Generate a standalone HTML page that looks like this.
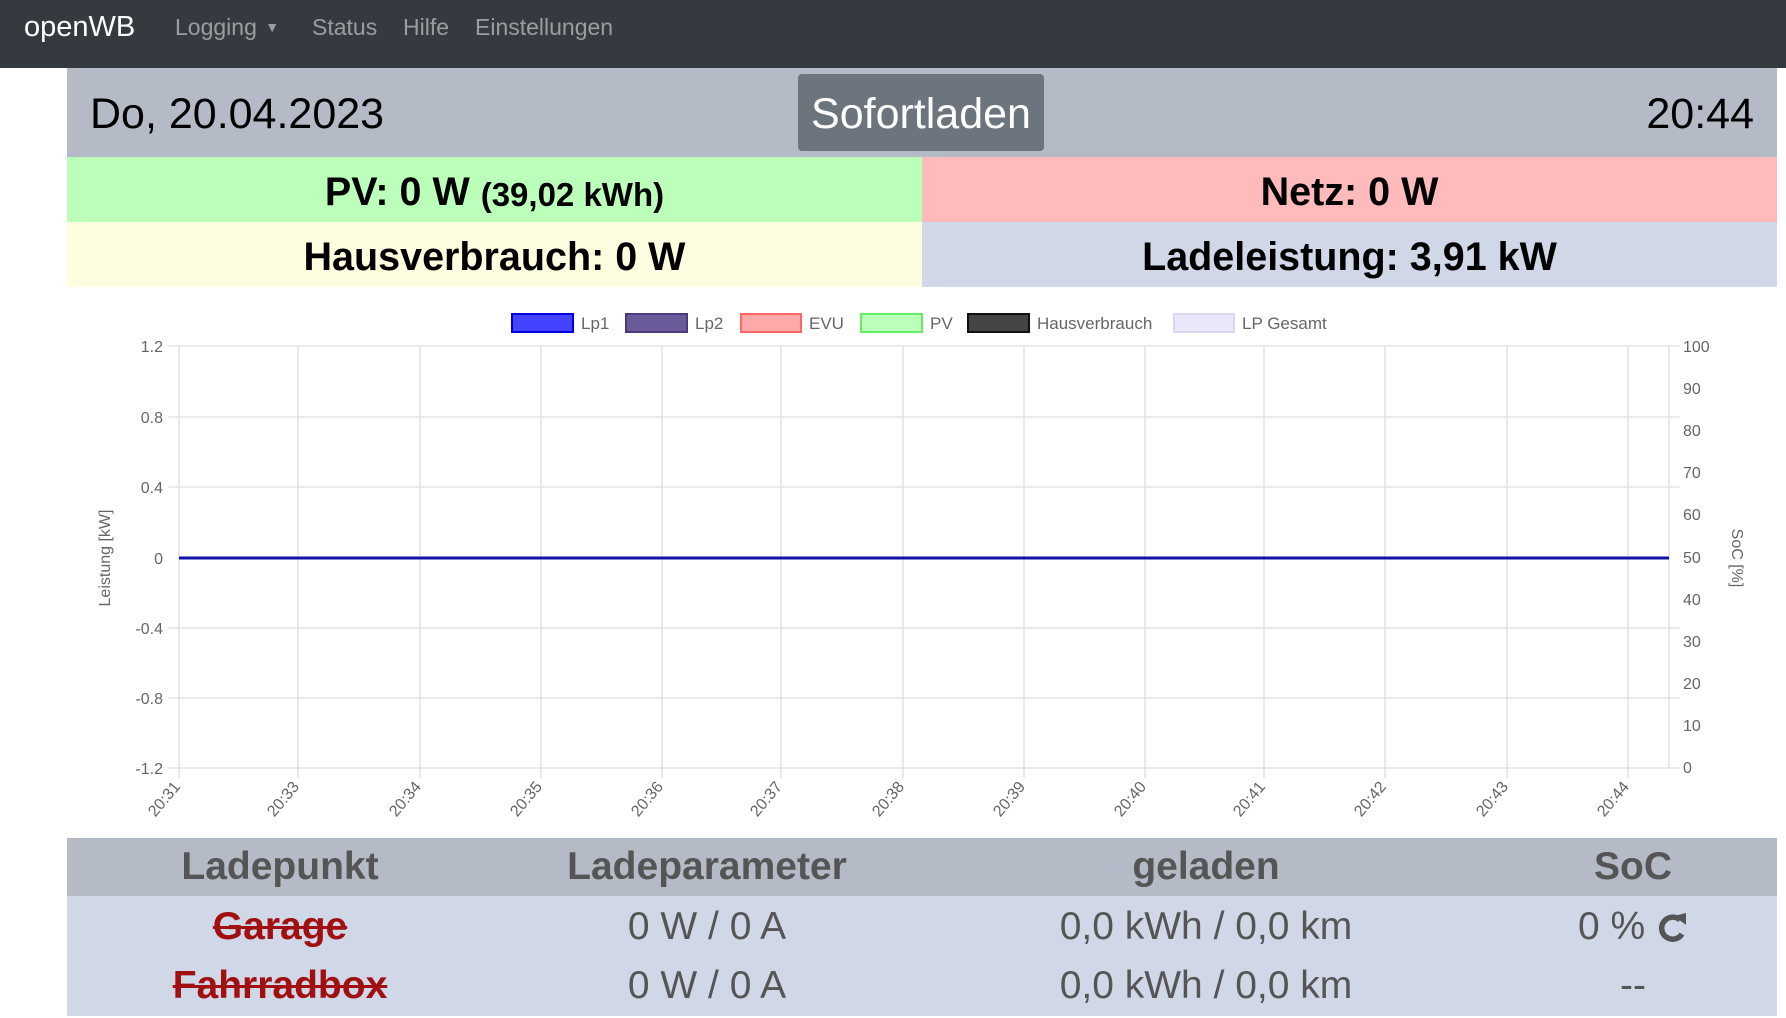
<!DOCTYPE html>
<html><head><meta charset="utf-8"><style>
*{margin:0;padding:0;box-sizing:border-box}
body{width:1786px;height:1018px;background:#fff;font-family:"Liberation Sans",sans-serif;position:relative;overflow:hidden}
.abs{position:absolute}
.nav{left:0;top:0;width:1786px;height:68px;background:#343a40}
.nav span{position:absolute;top:14px;font-size:23px;color:rgba(255,255,255,.5)}
.row{position:absolute;display:flex;align-items:center;justify-content:center;font-weight:bold;font-size:39.5px;color:#000;padding-top:6px}
.th,.td{position:absolute;text-align:center;font-size:39px;color:#555}
.th{font-weight:bold}
</style></head><body>
<div class="abs nav">
<span style="left:24px;top:11px;font-size:29px;color:#fff">openWB</span>
<span style="left:175px">Logging <span style="position:relative;top:-3px;font-size:14px;left:2px">▼</span></span>
<span style="left:312px">Status</span>
<span style="left:403px">Hilfe</span>
<span style="left:475px">Einstellungen</span>
</div>
<div class="abs" style="left:67px;top:68px;width:1710px;height:89px;background:#b4bac6"></div>
<div class="abs" style="left:90px;top:90px;font-size:43px;color:#000">Do, 20.04.2023</div>
<div class="abs" style="right:32px;top:90px;font-size:43px;color:#000">20:44</div>
<div class="abs" style="left:798px;top:74px;width:246px;height:77px;background:#6c757d;border-radius:4px;color:#fff;font-size:43px;display:flex;align-items:center;justify-content:center;padding-top:3px">Sofortladen</div>
<div class="row" style="left:67px;top:157px;width:855px;height:65px;background:#bbffbb">PV: 0 W&nbsp;<span style="font-size:33px;position:relative;top:2px">(39,02 kWh)</span></div>
<div class="row" style="left:922px;top:157px;width:855px;height:65px;background:#ffbbbb">Netz: 0 W</div>
<div class="row" style="left:67px;top:222px;width:855px;height:65px;background:#fffde0">Hausverbrauch: 0 W</div>
<div class="row" style="left:922px;top:222px;width:855px;height:65px;background:#d0d8e8">Ladeleistung: 3,91 kW</div>

<svg class="abs" style="left:0;top:0" width="1786" height="1018" font-family="Liberation Sans, sans-serif">
<g font-size="17" fill="#666">
<rect x="512" y="314" width="61" height="18" fill="#4444ff" stroke="#0000dd" stroke-width="2"/><text x="581" y="329">Lp1</text>
<rect x="626" y="314" width="61" height="18" fill="#6a5a9a" stroke="#4a3a80" stroke-width="2"/><text x="695" y="329">Lp2</text>
<rect x="741" y="314" width="60" height="18" fill="#ffaaaa" stroke="#ff6666" stroke-width="2"/><text x="809" y="329">EVU</text>
<rect x="861" y="314" width="61" height="18" fill="#bbffbb" stroke="#66ee66" stroke-width="2"/><text x="930" y="329">PV</text>
<rect x="968" y="314" width="61" height="18" fill="#444" stroke="#111" stroke-width="2"/><text x="1037" y="329">Hausverbrauch</text>
<rect x="1174" y="314" width="60" height="18" fill="#e8e8fa" stroke="#d8d8f0" stroke-width="2"/><text x="1242" y="329">LP Gesamt</text>
</g>
<g stroke="#ddd" stroke-width="1.3">
<line x1="168" y1="346" x2="1680" y2="346"/><line x1="168" y1="417" x2="1680" y2="417"/><line x1="168" y1="487" x2="1680" y2="487"/><line x1="168" y1="628" x2="1680" y2="628"/><line x1="168" y1="698" x2="1680" y2="698"/><line x1="168" y1="768" x2="1680" y2="768"/>
<line x1="179" y1="346" x2="179" y2="778"/><line x1="298" y1="346" x2="298" y2="778"/><line x1="420" y1="346" x2="420" y2="778"/><line x1="541" y1="346" x2="541" y2="778"/><line x1="662" y1="346" x2="662" y2="778"/><line x1="781" y1="346" x2="781" y2="778"/><line x1="903" y1="346" x2="903" y2="778"/><line x1="1024" y1="346" x2="1024" y2="778"/><line x1="1145" y1="346" x2="1145" y2="778"/><line x1="1264" y1="346" x2="1264" y2="778"/><line x1="1385" y1="346" x2="1385" y2="778"/><line x1="1507" y1="346" x2="1507" y2="778"/><line x1="1628" y1="346" x2="1628" y2="778"/><line x1="1669" y1="346" x2="1669" y2="768"/>
</g>
<line x1="179" y1="558" x2="1669" y2="558" stroke="#1010aa" stroke-width="3"/>
<g font-size="16" fill="#666" text-anchor="end">
<text x="163" y="352">1.2</text><text x="163" y="423">0.8</text><text x="163" y="493">0.4</text><text x="163" y="564">0</text><text x="163" y="634">-0.4</text><text x="163" y="704">-0.8</text><text x="163" y="774">-1.2</text>
</g>
<g font-size="16" fill="#666">
<text x="1683" y="352">100</text><text x="1683" y="394">90</text><text x="1683" y="436">80</text><text x="1683" y="478">70</text><text x="1683" y="520">60</text><text x="1683" y="563">50</text><text x="1683" y="605">40</text><text x="1683" y="647">30</text><text x="1683" y="689">20</text><text x="1683" y="731">10</text><text x="1683" y="773">0</text>
</g>
<text transform="translate(110,558) rotate(-90)" text-anchor="middle" font-size="16" fill="#666">Leistung [kW]</text>
<text transform="translate(1732,558) rotate(90)" text-anchor="middle" font-size="16" fill="#666">SoC [%]</text>
<g font-size="16" fill="#666" text-anchor="end">
<text transform="translate(181,787) rotate(-50)">20:31</text>
<text transform="translate(300,787) rotate(-50)">20:33</text>
<text transform="translate(422,787) rotate(-50)">20:34</text>
<text transform="translate(543,787) rotate(-50)">20:35</text>
<text transform="translate(664,787) rotate(-50)">20:36</text>
<text transform="translate(783,787) rotate(-50)">20:37</text>
<text transform="translate(905,787) rotate(-50)">20:38</text>
<text transform="translate(1026,787) rotate(-50)">20:39</text>
<text transform="translate(1147,787) rotate(-50)">20:40</text>
<text transform="translate(1266,787) rotate(-50)">20:41</text>
<text transform="translate(1387,787) rotate(-50)">20:42</text>
<text transform="translate(1509,787) rotate(-50)">20:43</text>
<text transform="translate(1630,787) rotate(-50)">20:44</text>
</g>
</svg>

<div class="abs" style="left:67px;top:838px;width:1710px;height:58px;background:#b4bac6"></div>
<div class="abs" style="left:67px;top:896px;width:1710px;height:120px;background:#d0d8e8"></div>
<div class="th" style="left:80px;width:400px;top:845px">Ladepunkt</div>
<div class="th" style="left:507px;width:400px;top:845px">Ladeparameter</div>
<div class="th" style="left:1006px;width:400px;top:845px">geladen</div>
<div class="th" style="left:1433px;width:400px;top:845px">SoC</div>
<div class="td" style="left:80px;width:400px;top:905px;color:#a01010;font-weight:bold;text-decoration:line-through">Garage</div>
<div class="td" style="left:80px;width:400px;top:964px;color:#a01010;font-weight:bold;text-decoration:line-through">Fahrradbox</div>
<div class="td" style="left:507px;width:400px;top:905px">0 W / 0 A</div>
<div class="td" style="left:507px;width:400px;top:964px">0 W / 0 A</div>
<div class="td" style="left:1006px;width:400px;top:905px">0,0 kWh / 0,0 km</div>
<div class="td" style="left:1006px;width:400px;top:964px">0,0 kWh / 0,0 km</div>
<div class="td" style="left:1433px;width:400px;top:905px">0 % <svg width="32" height="34" viewBox="0 0 32 34" style="vertical-align:-5px"><path d="M24 10 A11 11 0 1 0 26 24" fill="none" stroke="#555" stroke-width="5.5"/><path d="M18 6 L30 3 L30 15 Z" fill="#555"/></svg></div>
<div class="td" style="left:1433px;width:400px;top:964px">--</div>
</body></html>
